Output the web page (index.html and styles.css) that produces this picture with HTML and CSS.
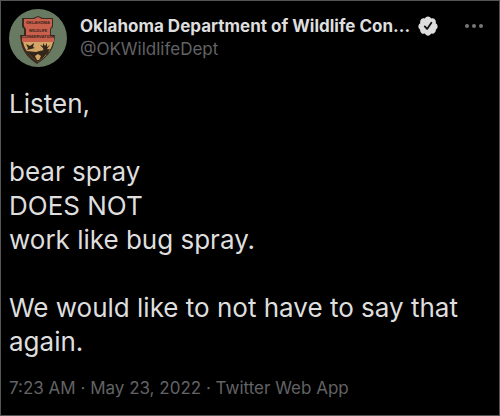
FILE: index.html
```html
<!DOCTYPE html>
<html lang="en">
<head>
    <meta charset="UTF-8">
    <meta name="viewport" content="width=device-width, initial-scale=1.0">
    <title>Oklahoma Department of Wildlife Conservation</title>
    <link rel="stylesheet" href="styles.css">
</head>
<body>
    <article class="tweet">
        <!-- Author -->
        <header class="tweet-header">
            <a href="#" class="avatar" aria-label="Oklahoma Department of Wildlife Conservation">
                <svg viewBox="0 0 58 58" width="58" height="58" aria-hidden="true">
                    <circle cx="29" cy="29" r="29" fill="#687b62"/>
                    <!-- Arrowhead badge -->
                    <path d="M15 9h9l5-2 5 2h10v9l-2 2v6h4l-1 8c-2 9-8 15-17 21-9-6-14-12-16-21l-1-8h4v-6l-2-2V9z" fill="#3a2a1f"/>
                    <path d="M16 10h9l4-2 4 2h10v7l-2 3v7h4v6H13v-6h4v-7l-2-3v-7z" fill="#c8604c"/>
                    <path d="M14 33h30c-2 9-7 14-15 20-8-6-13-11-15-20z" fill="#d3a566"/>
                    <!-- Ground, bird and deer -->
                    <path d="M17 42c4 0 7 1 10 1 5-1 9-3 14-3-3 5-7 9-12 13-5-4-9-7-12-11z" fill="#33271b"/>
                    <path d="M26 47l3-2 3 2-2 4h-2z" fill="#d3a566"/>
                    <path d="M17 35l4 2 4-3-1 4 2 1-4 1-4 1 1-2zM35 44l-1-5-3-3 3 1v-3l2 3 2-3v4l3-2-3 4 2 3-2 3z" fill="#33271b"/>
                    <g class="badge-text">
                        <text x="29" y="15">OKLAHOMA</text>
                        <text x="29" y="23">WILDLIFE</text>
                        <text x="29" y="29">CONSERVATION</text>
                    </g>
                </svg>
            </a>
            <div class="author">
                <div class="name-row">
                    <a href="#" class="name">Oklahoma Department of Wildlife Con...</a>
                    <svg class="verified" viewBox="0 0 24 24" width="22" height="22" role="img" aria-label="Verified account">
                        <path fill="#dedede" d="M22.5 12.5c0-1.58-.875-2.95-2.148-3.6.154-.435.238-.905.238-1.4 0-2.21-1.71-3.998-3.818-3.998-.47 0-.92.084-1.336.25C14.818 2.415 13.51 1.5 12 1.5s-2.816.917-3.437 2.25c-.415-.165-.866-.25-1.336-.25-2.11 0-3.818 1.79-3.818 4 0 .494.083.964.237 1.4-1.272.65-2.147 2.018-2.147 3.6 0 1.495.782 2.798 1.942 3.486-.02.17-.032.34-.032.514 0 2.21 1.708 4 3.818 4 .47 0 .92-.086 1.335-.25.62 1.334 1.926 2.25 3.437 2.25 1.512 0 2.818-.916 3.437-2.25.415.163.865.248 1.336.248 2.11 0 3.818-1.79 3.818-4 0-.174-.012-.344-.033-.513 1.158-.687 1.943-1.99 1.943-3.484z"/>
                        <path fill="none" stroke="#111" stroke-width="2" stroke-linecap="round" stroke-linejoin="round" d="M8.500 12.500l2.500 2.700 4.700-6.700"/>
                    </svg>
                </div>
                <a href="#" class="handle">@OKWildlifeDept</a>
            </div>
            <button type="button" class="more" aria-label="More">
                <svg viewBox="0 0 18 4" width="18" height="4" aria-hidden="true">
                    <circle cx="2" cy="2" r="2"/>
                    <circle cx="9" cy="2" r="2"/>
                    <circle cx="16" cy="2" r="2"/>
                </svg>
            </button>
        </header>

        <!-- Tweet text -->
        <div class="tweet-text">
            <p>Listen,</p>
            <p>bear spray<br>DOES NOT<br>work like bug spray.</p>
            <p>We would like to not have to say that again.</p>
        </div>

        <!-- Time and source -->
        <footer class="tweet-meta">
            <a href="#">7:23 AM · May 23, 2022</a> · <a href="#">Twitter Web App</a>
        </footer>
    </article>
</body>
</html>
```

FILE: styles.css
```css
* {
    box-sizing: border-box;
}
body {
    margin: 0;
    background-color: #000;
    color: #dedede;
    font-family: Inter, "Liberation Sans", sans-serif;
}
a {
    color: inherit;
    text-decoration: none;
}
.tweet {
    min-height: 100vh;
    padding: 8px;
    border: 1px solid #555;
}
.tweet-header {
    display: flex;
    align-items: flex-start;
}
.avatar {
    flex: none;
    height: 58px;
}
.badge-text {
    fill: #3a1f1b;
    font-size: 4px;
    font-weight: 700;
    text-anchor: middle;
}
.author {
    flex: 1;
    min-width: 0;
    margin-left: 13px;
    padding-top: 5px;
}
.name-row {
    display: flex;
    align-items: center;
    height: 24px;
}
.name {
    overflow: hidden;
    font-size: 17px;
    font-weight: 700;
    line-height: 24px;
    white-space: nowrap;
}
.verified {
    flex: none;
    margin-left: 7px;
}
.handle {
    display: block;
    color: #626365;
    font-size: 17px;
    line-height: 22px;
}
.more {
    display: flex;
    margin: 15px 8px 0 0;
    padding: 0;
    border: none;
    background: none;
    cursor: pointer;
}
.more svg {
    fill: #777;
}
.tweet-text {
    margin-top: 20px;
    font-size: 26px;
    line-height: 34px;
}
.tweet-text p {
    margin: 0 0 34px;
}
.tweet-text p:last-child {
    margin-bottom: 0;
}
.tweet-meta {
    margin-top: 17px;
    color: #626365;
    font-size: 17px;
    line-height: 24px;
}
```
